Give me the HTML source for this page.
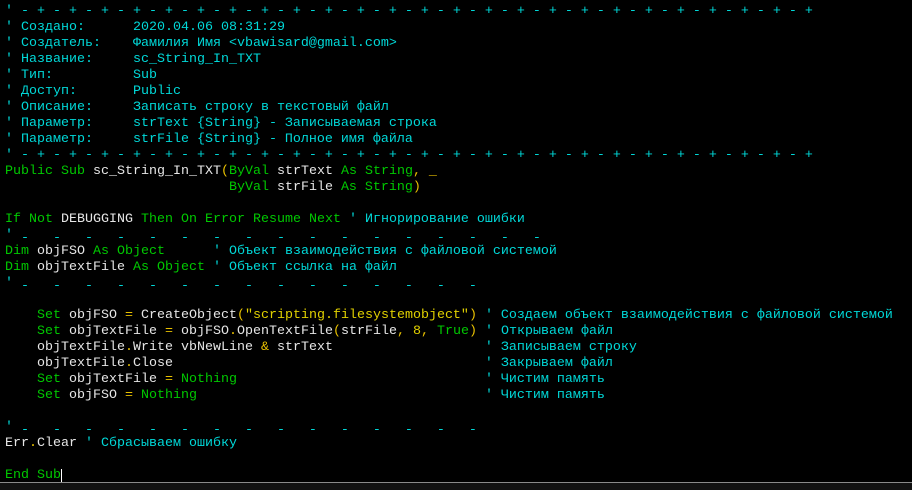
<!DOCTYPE html>
<html><head><meta charset="utf-8"><style>
html,body{margin:0;padding:0;background:#000;width:912px;height:490px;overflow:hidden}
pre{margin:0;position:absolute;left:5px;top:4px;font-family:"Liberation Mono","DejaVu Sans Mono",monospace;font-size:13.33px;line-height:16px;color:#e6e6e6}
.c{color:#00d8d8}.k{color:#00c800}.o{color:#e8c000}.s{color:#e0d000}
.d{position:relative;top:3px}
.bar{position:absolute;left:0;top:482px;width:912px;height:1px;background:#8a8a8a}
.bot{position:absolute;left:0;top:483px;width:912px;height:7px;background:#111}
.cur{position:absolute;left:61px;top:469px;width:1px;height:15px;background:#fff}
</style></head><body>
<pre><span class="c">' - + - + - + - + - + - + - + - + - + - + - + - + - + - + - + - + - + - + - + - + - + - + - + - + - +
' Создано:      2020.04.06 08:31:29
' Создатель:    Фамилия Имя &lt;vbawisard@gmail.com&gt;
' Название:     sc_String_In_TXT
' Тип:          Sub
' Доступ:       Public
' Описание:     Записать строку в текстовый файл
' Параметр:     strText {String} - Записываемая строка
' Параметр:     strFile {String} - Полное имя файла
' - + - + - + - + - + - + - + - + - + - + - + - + - + - + - + - + - + - + - + - + - + - + - + - + - +</span>
<span class="k">Public Sub</span> sc_String_In_TXT<span class="o">(</span><span class="k">ByVal</span> strText <span class="k">As String</span><span class="o">, _</span>
                            <span class="k">ByVal</span> strFile <span class="k">As String</span><span class="o">)</span>

<span class="k">If Not</span> DEBUGGING <span class="k">Then On Error Resume Next</span> <span class="c">' Игнорирование ошибки</span>
<span class="c">'<span class="d"> -   -   -   -   -   -   -   -   -   -   -   -   -   -   -   -   -</span></span>
<span class="k">Dim</span> objFSO <span class="k">As Object</span>      <span class="c">' Объект взаимодействия с файловой системой</span>
<span class="k">Dim</span> objTextFile <span class="k">As Object</span> <span class="c">' Объект ссылка на файл</span>
<span class="c">'<span class="d"> -   -   -   -   -   -   -   -   -   -   -   -   -   -   -</span></span>

    <span class="k">Set</span> objFSO <span class="o">=</span> CreateObject<span class="o">(</span><span class="s">"scripting.filesystemobject"</span><span class="o">)</span> <span class="c">' Создаем объект взаимодействия с файловой системой</span>
    <span class="k">Set</span> objTextFile <span class="o">=</span> objFSO<span class="o">.</span>OpenTextFile<span class="o">(</span>strFile<span class="o">,</span> <span class="s">8</span><span class="o">,</span> <span class="k">True</span><span class="o">)</span> <span class="c">' Открываем файл</span>
    objTextFile<span class="o">.</span>Write vbNewLine <span class="o">&amp;</span> strText                   <span class="c">' Записываем строку</span>
    objTextFile<span class="o">.</span>Close                                       <span class="c">' Закрываем файл</span>
    <span class="k">Set</span> objTextFile <span class="o">=</span> <span class="k">Nothing</span>                               <span class="c">' Чистим память</span>
    <span class="k">Set</span> objFSO <span class="o">=</span> <span class="k">Nothing</span>                                    <span class="c">' Чистим память</span>

<span class="c">'<span class="d"> -   -   -   -   -   -   -   -   -   -   -   -   -   -   -</span></span>
Err<span class="o">.</span>Clear <span class="c">' Сбрасываем ошибку</span>

<span class="k">End Sub</span></pre>
<div class="cur"></div>
<div class="bar"></div><div class="bot"></div>
</body></html>
